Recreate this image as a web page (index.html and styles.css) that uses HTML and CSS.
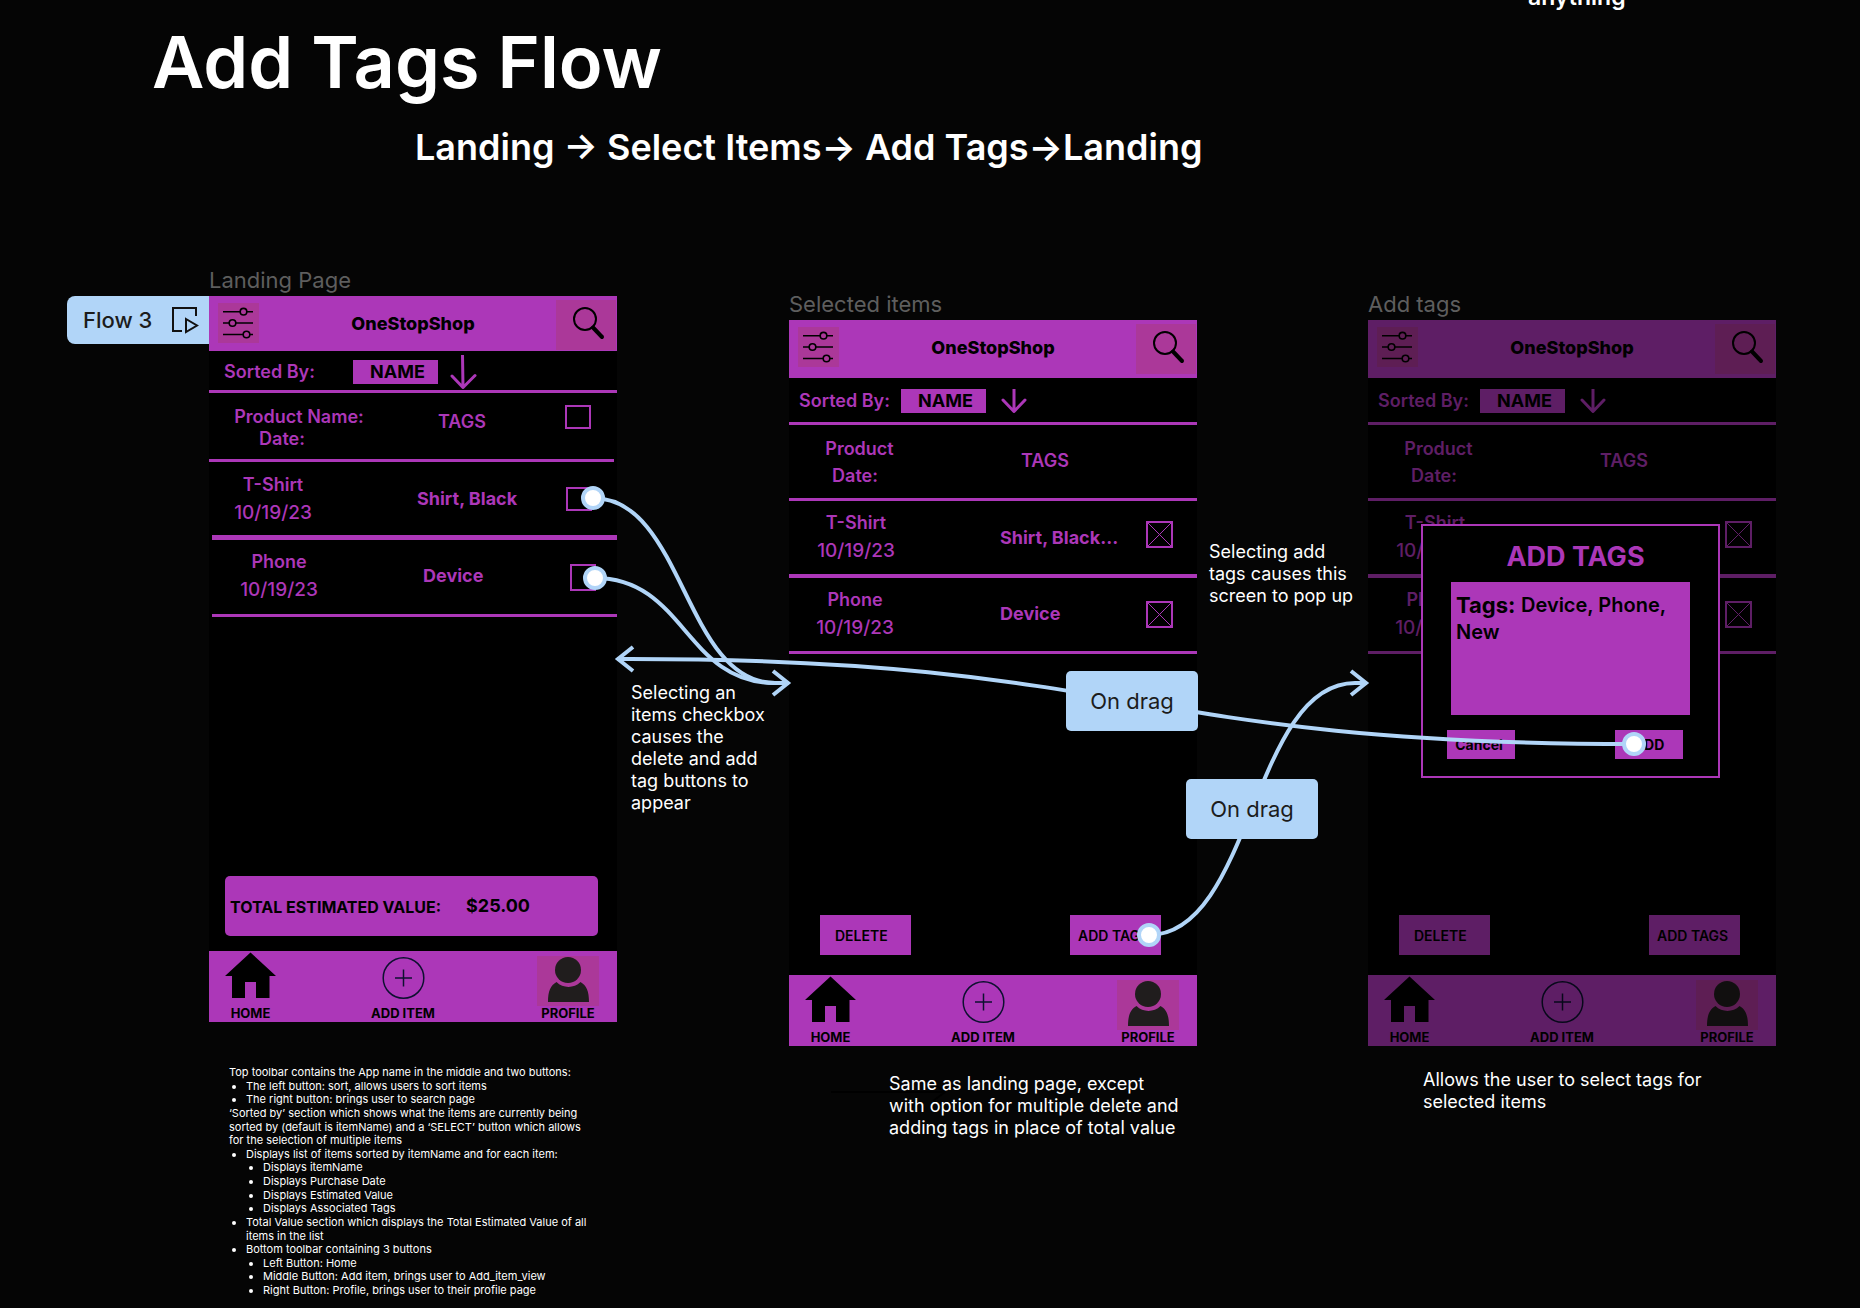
FILE: index.html
```html
<!DOCTYPE html>
<html lang="en">
<head>
<meta charset="utf-8">
<meta name="viewport" content="width=device-width, initial-scale=1">
<title>Add Tags Flow</title>
<link rel="stylesheet" href="styles.css">
</head>
<body>
<svg class="symbols" aria-hidden="true">
  <symbol id="i-sort" viewBox="0 0 41 40">
    <g fill="none" stroke="#000" stroke-width="1.6">
      <path d="M5 8.700h17M29 8.700h6M5 20h6M18 20h17M5 31.500h20M32 31.500h3"/>
      <circle cx="25.500" cy="8.700" r="3.300"/><circle cx="14.500" cy="20" r="3.300"/><circle cx="28.500" cy="31.500" r="3.300"/>
    </g>
  </symbol>
  <symbol id="i-search" viewBox="0 0 60 50">
    <g fill="none" stroke="#000" stroke-linecap="round">
      <circle cx="29" cy="19" r="11" stroke-width="2"/><path d="M37 27.500l9 9.500" stroke-width="4"/>
    </g>
  </symbol>
  <symbol id="i-home" viewBox="0 0 51 55">
    <path d="M25.500 1.500L51 25h-6.500v22H31V31H20v16H7V25H0z" fill="#000"/>
  </symbol>
  <symbol id="i-plus" viewBox="0 0 51 55">
    <g fill="none" stroke="#0d1030" stroke-width="1.500"><circle cx="25.500" cy="27" r="20.300"/><path d="M25.500 18.500v17M17 27h17"/></g>
  </symbol>
  <symbol id="i-profile" viewBox="0 0 62 50">
    <g fill="#201d1d"><circle cx="31" cy="14" r="13"/><path d="M19.500 26c-6 3.500-8.500 9-8.500 20h41c0-11-2.500-16.500-8.500-20-6.500 6.500-17.500 6.500-24 0z"/></g>
  </symbol>
</svg>

<main class="canvas">
  <header class="heading">
    <h1>Add Tags Flow</h1>
    <p class="path">Landing → Select Items→ Add Tags→Landing</p>
  </header>
  <p class="stray">anything</p>

  <div class="flow-tag">
    <span>Flow 3</span>
    <svg width="28" height="28" viewBox="0 0 28 28" fill="none" stroke="#111" stroke-width="2"><path d="M11 25H2V2h23v8"/><path d="M15 13l11 6.500L15 26z"/></svg>
  </div>

  <section class="node landing">
    <h2 class="frame-name">Landing Page</h2>
    <div class="frame">
      <div class="topbar">
        <button class="tile sort" aria-label="Sort"><svg width="41" height="40"><use href="#i-sort"/></svg></button>
        <strong>OneStopShop</strong>
        <button class="tile search" aria-label="Search"><svg width="60" height="50"><use href="#i-search"/></svg></button>
      </div>
      <div class="sortbar">
        <span class="sort-label">Sorted By:</span>
        <button class="chip">NAME</button>
        <svg class="arrow" width="28" height="34" viewBox="0 0 28 34"><path d="M13.500 0l.5 32M3 21l11 11.500L26 20.500"/></svg>
      </div>
      <table>
        <tr class="row head"><td class="product"><div>Product Name:</div><div class="second">Date:</div></td><td class="tags">TAGS</td><td><input type="checkbox" aria-label="Select all"></td></tr>
        <tr class="row thick"><td class="product"><div>T-Shirt</div><div class="date">10/19/23</div></td><td class="tags">Shirt, Black</td><td><input type="checkbox" aria-label="Select T-Shirt"></td></tr>
        <tr class="row last"><td class="product"><div>Phone</div><div class="date">10/19/23</div></td><td class="tags">Device</td><td><input type="checkbox" aria-label="Select Phone"></td></tr>
      </table>
      <div class="total"><span>TOTAL ESTIMATED VALUE:</span><output>$25.00</output></div>
      <nav class="bottombar">
        <a href="#home"><svg width="51" height="55"><use href="#i-home"/></svg>HOME</a>
        <a href="#add"><svg width="51" height="55"><use href="#i-plus"/></svg>ADD ITEM</a>
        <a href="#profile"><svg class="portrait" width="62" height="50"><use href="#i-profile"/></svg>PROFILE</a>
      </nav>
    </div>
  </section>

  <section class="node selected">
    <h2 class="frame-name">Selected items</h2>
    <div class="frame">
      <div class="topbar">
        <button class="tile sort" aria-label="Sort"><svg width="41" height="40"><use href="#i-sort"/></svg></button>
        <strong>OneStopShop</strong>
        <button class="tile search" aria-label="Search"><svg width="60" height="50"><use href="#i-search"/></svg></button>
      </div>
      <div class="sortbar">
        <span class="sort-label">Sorted By:</span>
        <button class="chip">NAME</button>
        <svg class="arrow" width="28" height="24" viewBox="0 0 28 24"><path d="M14 0v22M3 11l11 11.500L25 11"/></svg>
      </div>
      <table>
        <tr class="row head"><td class="product"><div>Product</div><div class="second">Date:</div></td><td class="tags">TAGS</td><td></td></tr>
        <tr class="row thick"><td class="product"><div>T-Shirt</div><div class="date">10/19/23</div></td><td class="tags">Shirt, Black...</td><td><input type="checkbox" aria-label="Select T-Shirt" checked></td></tr>
        <tr class="row last"><td class="product"><div>Phone</div><div class="date">10/19/23</div></td><td class="tags">Device</td><td><input type="checkbox" aria-label="Select Phone" checked></td></tr>
      </table>
      <div class="actions"><button>DELETE</button><button class="add">ADD TAGS</button></div>
      <nav class="bottombar">
        <a href="#home"><svg width="51" height="55"><use href="#i-home"/></svg>HOME</a>
        <a href="#add"><svg width="51" height="55"><use href="#i-plus"/></svg>ADD ITEM</a>
        <a href="#profile"><svg class="portrait" width="62" height="50"><use href="#i-profile"/></svg>PROFILE</a>
      </nav>
    </div>
  </section>

  <section class="node selected adding">
    <h2 class="frame-name">Add tags</h2>
    <div class="backdrop"><div class="frame">
      <div class="topbar">
        <button class="tile sort" aria-label="Sort"><svg width="41" height="40"><use href="#i-sort"/></svg></button>
        <strong>OneStopShop</strong>
        <button class="tile search" aria-label="Search"><svg width="60" height="50"><use href="#i-search"/></svg></button>
      </div>
      <div class="sortbar">
        <span class="sort-label">Sorted By:</span>
        <button class="chip">NAME</button>
        <svg class="arrow" width="28" height="24" viewBox="0 0 28 24"><path d="M14 0v22M3 11l11 11.500L25 11"/></svg>
      </div>
      <table>
        <tr class="row head"><td class="product"><div>Product</div><div class="second">Date:</div></td><td class="tags">TAGS</td><td></td></tr>
        <tr class="row thick"><td class="product"><div>T-Shirt</div><div class="date">10/19/23</div></td><td class="tags"></td><td><input type="checkbox" aria-label="Select T-Shirt" checked></td></tr>
        <tr class="row last"><td class="product"><div>Phone</div><div class="date">10/19/23</div></td><td class="tags"></td><td><input type="checkbox" aria-label="Select Phone" checked></td></tr>
      </table>
      <div class="actions"><button>DELETE</button><button class="add">ADD TAGS</button></div>
      <nav class="bottombar">
        <a href="#home"><svg width="51" height="55"><use href="#i-home"/></svg>HOME</a>
        <a href="#add"><svg width="51" height="55"><use href="#i-plus"/></svg>ADD ITEM</a>
        <a href="#profile"><svg class="portrait" width="62" height="50"><use href="#i-profile"/></svg>PROFILE</a>
      </nav>
    </div></div>
    <form class="dialog">
      <h3>ADD TAGS</h3>
      <div class="field"><label for="tags">Tags:</label><textarea id="tags">Device, Phone, New</textarea></div>
      <div class="dialog-actions"><button type="button" class="cancel">Cancel</button><button type="button">ADD</button></div>
    </form>
  </section>

  <div class="note details">
    <p>Top toolbar contains the App name in the middle and two buttons:</p>
    <ul><li>The left button: sort, allows users to sort items</li><li>The right button: brings user to search page</li></ul>
    <p>‘Sorted by’ section which shows what the items are currently being sorted by (default is itemName) and a ‘SELECT’ button which allows for the selection of multiple items</p>
    <ul>
      <li>Displays list of items sorted by itemName and for each item:
        <ul><li>Displays itemName</li><li>Displays Purchase Date</li><li>Displays Estimated Value</li><li>Displays Associated Tags</li></ul></li>
      <li>Total Value section which displays the Total Estimated Value of all items in the list</li>
      <li>Bottom toolbar containing 3 buttons
        <ul><li>Left Button: Home</li><li>Middle Button: Add item, brings user to Add_item_view</li><li>Right Button: Profile, brings user to their profile page</li></ul></li>
    </ul>
  </div>
  <p class="note checkbox-note">Selecting an items checkbox causes the delete and add tag buttons to appear</p>
  <p class="note popup-note">Selecting add tags causes this screen to pop up</p>

  <svg class="wires" width="1860" height="1308" viewBox="0 0 1860 1308" aria-hidden="true">
    <path class="faint" d="M831 1092h114M933 1101l12-9-12-9"/>
    <g class="wire">
      <path d="M593 498C684 498 684 683 775 683H787M773 671l15 12-15 12"/>
      <path d="M595 578C685 578 685 683 775 683"/>
      <path d="M1634 744C1132 744 1132 659 630 659H618M633 647l-15 12 15 12"/>
      <path d="M1149 935C1252 935 1252 683 1355 683H1365M1351 671l15 12-15 12"/>
    </g>
    <g class="knob"><circle cx="593" cy="498" r="10"/><circle cx="595" cy="578" r="10"/><circle cx="1634" cy="744" r="10"/><circle cx="1149" cy="935" r="10"/></g>
  </svg>
  <p class="note selected-note">Same as landing page, except with option for multiple delete and adding tags in place of total value</p>
  <p class="note adding-note">Allows the user to select tags for selected items</p>
  <div class="trigger first">On drag</div>
  <div class="trigger second">On drag</div>
</main>
</body>
</html>
```
FILE: styles.css
```css
* { box-sizing: border-box; }
:root { --purple: #ac37b8; --blue: #b1d5f8; }
body { margin: 0; background: #050505; color: #fff; font-family: Inter, "Liberation Sans", sans-serif; }
h1, h2, h3, p, ul { margin: 0; }
button { border: 0; padding: 0; border-radius: 0; font-family: inherit; color: #000; background: var(--purple); cursor: pointer; }
svg { display: block; }
.symbols { position: absolute; width: 0; height: 0; }

.canvas { position: relative; min-height: 100vh; overflow: hidden; }

.heading { padding: 18px 0 0 152px; }
.heading h1 { font-size: 72px; line-height: 88px; font-weight: 600; }
.path { padding: 19px 0 0 263px; font-size: 36px; line-height: 44px; font-weight: 600; }
.stray { position: absolute; left: 1528px; top: -17px; font-size: 23px; line-height: 28px; font-weight: 600; }

/* Frames placed on the canvas */
.node { position: absolute; width: 408px; }
.landing { left: 209px; top: 266px; }
.selected { left: 789px; top: 290px; }
.adding { left: 1368px; }
.frame-name { height: 30px; font-size: 22px; line-height: 28px; font-weight: 400; color: #5e5e5e; white-space: nowrap; }
.frame { display: flex; flex-direction: column; min-height: 726px; background: #000; color: var(--purple); }
.backdrop { background: #000; }
.backdrop .frame { opacity: 0.55; }

.topbar { display: grid; grid-template-columns: 61px 1fr 61px; height: 55px; background: var(--purple); color: #000; }
.selected .topbar { height: 58px; }
.topbar strong { padding-top: 17px; text-align: center; font-size: 18px; line-height: 22px; font-weight: 800; }
.tile { background: #ab3899; }
.tile.sort { width: 41px; height: 40px; margin: 7px 0 0 9px; }
.tile.search { width: 60px; height: 50px; margin-top: 4px; }

.sortbar { display: flex; align-items: center; height: 42px; padding: 3px 0 0 15px; border-bottom: 3px solid var(--purple); }
.sort-label { width: 129px; font-size: 18px; line-height: 22px; font-weight: 600; }
.chip { width: 85px; height: 24px; padding-left: 4px; font-size: 18px; line-height: 24px; font-weight: 700; }
.arrow { margin-left: 11px; fill: none; stroke: var(--purple); stroke-width: 3; stroke-linecap: round; stroke-linejoin: round; }
.selected .sortbar { height: 47px; padding: 2px 0 0 10px; }
.selected .sort-label { width: 102px; }
.selected .arrow { margin-left: 14px; }

/* Item list */
table, tbody { display: block; }
.row { display: grid; grid-template-columns: 208px 148px 1fr; align-items: center; height: 77px; border-bottom: 3px solid var(--purple); font-size: 18px; line-height: 28px; font-weight: 600; }
.row.thick { height: 78px; border-bottom-width: 5px; }
td { padding: 0; }
.product { text-align: center; padding-right: 80px; }
.date { font-size: 19px; font-weight: 500; }
.tags { white-space: nowrap; font-weight: 700; }
.row.last .product { padding: 0 71px 3px 0; }
.row.last .tags { padding: 0 0 3px 6px; }
.row.head { height: 69px; line-height: 22px; }
.row.head .tags { padding: 0 0 8px 21px; font-weight: 600; }
.landing .row.head .product { padding: 4px 28px 0 0; }
.landing .row.head .second { padding-right: 34px; }
.landing .row.head input { margin-bottom: 18px; }
.landing .row.thick, .landing .row.last { margin-left: 3px; grid-template-columns: 205px 149px 1fr; }
.landing .row.thick .product { padding-right: 83px; }
.landing .row.head { margin-right: 3px; }
.landing .row.last input { height: 27px; margin-left: 4px; }

.selected .row { grid-template-columns: 211px 146px 1fr; height: 76px; }
.selected .row.thick { height: 77px; border-bottom-width: 4px; }
.selected .row.thick .product { padding: 0 77px 2px 0; }
.selected .row.thick input { margin-bottom: 6px; }
.selected .row.last .product { padding: 0 79px 2px 0; }
.selected .row.last .tags { padding: 0 0 2px; }
.selected .row.head { line-height: 27px; }
.selected .row.head .product { padding-right: 70px; }
.selected .row.head .second { padding-right: 9px; }
.selected .row.head .tags { padding-bottom: 2px; }

input[type="checkbox"] { appearance: none; display: block; width: 26px; height: 24px; margin: 0; border: 2px solid var(--purple); background: #000; }
input[type="checkbox"]:checked {
  width: 27px; height: 27px;
  background:
    linear-gradient(45deg, transparent 48%, var(--purple) 48%, var(--purple) 52%, transparent 52%),
    linear-gradient(-45deg, transparent 48%, var(--purple) 48%, var(--purple) 52%, transparent 52%);
}

.total { display: flex; align-items: center; gap: 25px; height: 60px; margin: auto 19px 15px 16px; padding-left: 5px; border-radius: 5px; background: var(--purple); color: #000; font-size: 16px; line-height: 22px; font-weight: 700; white-space: nowrap; }
.total span { padding-top: 2px; }
.total output { font-size: 18px; }

.actions { display: flex; justify-content: space-between; margin: auto 36px 20px 31px; }
.actions button { width: 91px; height: 40px; padding: 2px 0 0 15px; text-align: left; font-size: 14px; line-height: 18px; font-weight: 600; }
.actions .add { padding-left: 8px; }

.bottombar { display: grid; grid-template-columns: 51px 1fr 62px; justify-items: center; height: 71px; padding: 0 18px 0 16px; background: var(--purple); }
.bottombar a { display: flex; flex-direction: column; align-items: center; color: #000; text-decoration: none; white-space: nowrap; font-size: 13px; line-height: 15px; font-weight: 700; }
.bottombar a:nth-child(2) { margin-right: 7px; }
.portrait { margin-top: 5px; background: #ab3899; }

/* Dialog over the third frame */
.dialog { position: absolute; left: 53px; top: 234px; width: 299px; padding: 17px 28px 17px; border: 2px solid var(--purple); background: #000; color: var(--purple); }
.dialog h3 { margin-bottom: 11px; padding-left: 10px; text-align: center; font-size: 27px; line-height: 28px; font-weight: 700; }
.field { position: relative; width: 239px; color: #000; }
.field label { position: absolute; left: 5px; top: 9px; font-size: 22px; line-height: 28px; font-weight: 700; }
.field textarea { display: block; width: 100%; height: 133px; padding: 10px 5px; border: 0; border-radius: 0; resize: none; overflow: hidden; background: var(--purple); color: #000; font-family: inherit; font-size: 20px; line-height: 27px; font-weight: 600; text-indent: 65px; }
.dialog-actions { display: flex; justify-content: space-between; padding: 15px 7px 0 0; margin-left: -4px; }
.dialog-actions button { width: 68px; height: 29px; font-size: 14px; line-height: 18px; font-weight: 700; }
.dialog-actions .cancel { padding-right: 4px; }

/* Annotations */
.note { position: absolute; font-size: 18px; line-height: 22px; font-weight: 400; }
.checkbox-note { left: 631px; top: 682px; width: 140px; }
.popup-note { left: 1209px; top: 541px; width: 150px; }
.selected-note { left: 889px; top: 1073px; width: 293px; }
.adding-note { left: 1423px; top: 1069px; width: 300px; }
.details { left: 229px; top: 1066px; width: 362px; font-size: 11px; line-height: 1.24; }
.details ul { padding-left: 17px; list-style: disc; }

/* Prototype connections */
.wires { position: absolute; left: 0; top: 0; pointer-events: none; }
.faint { fill: none; stroke: #000; stroke-width: 2; }
.wire { fill: none; stroke: var(--blue); stroke-width: 4; }
.knob { fill: #fff; stroke: var(--blue); stroke-width: 4; }
.trigger { position: absolute; width: 132px; padding: 16px 0; border-radius: 5px; background: var(--blue); color: #1c1c1c; text-align: center; font-size: 22px; line-height: 28px; font-weight: 400; }
.trigger.first { left: 1066px; top: 671px; }
.trigger.second { left: 1186px; top: 779px; }
.flow-tag { position: absolute; left: 67px; top: 296px; display: flex; align-items: center; justify-content: space-between; width: 142px; height: 48px; padding: 0 10px 0 16px; border-radius: 8px 0 0 8px; background: var(--blue); color: #1c1c1c; font-size: 22px; line-height: 28px; font-weight: 500; }
```
